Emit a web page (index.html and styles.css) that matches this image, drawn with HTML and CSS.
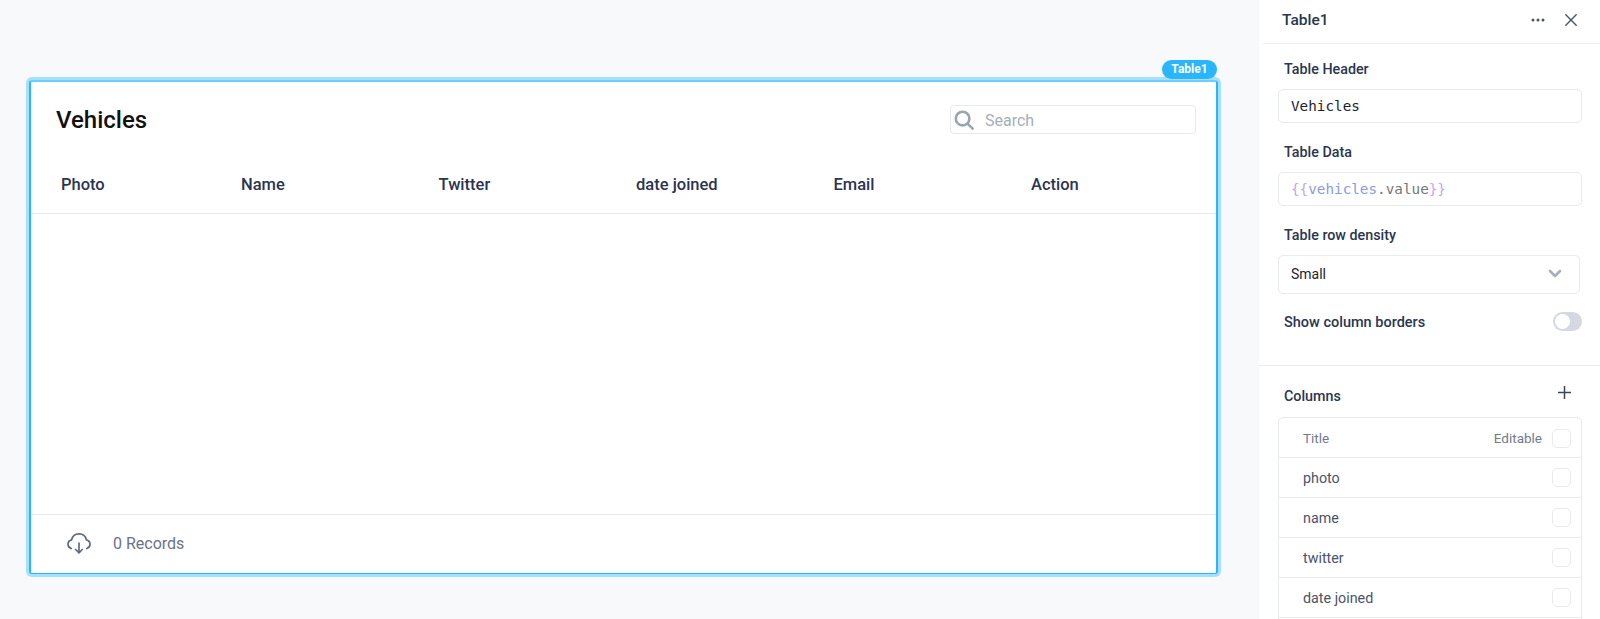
FILE: index.html
```html
<!DOCTYPE html>
<html lang="en">
<head>
<meta charset="utf-8">
<title>Table1</title>
<link rel="stylesheet" href="styles.css">
</head>
<body>
<div class="app">
  <main class="canvas">
    <section class="widget">
      <span class="pill">Table1</span>
      <div class="widget-head">
        <h1 class="title">Vehicles</h1>
        <div class="search">
          <svg class="search-icon" viewBox="0 0 20 20" width="20" height="20" fill="none" stroke="#9aa5b1" stroke-width="2.6" stroke-linecap="round"><circle cx="8.6" cy="8.6" r="6.800"/><path d="M13.8 13.8L18.6 18.6"/></svg>
          <span class="search-text">Search</span>
        </div>
      </div>
      <div class="thead">
        <span class="th">Photo</span>
        <span class="th">Name</span>
        <span class="th">Twitter</span>
        <span class="th">date joined</span>
        <span class="th">Email</span>
        <span class="th">Action</span>
      </div>
      <div class="tbody"></div>
      <div class="tfoot">
        <svg class="cloud" viewBox="0 0 24 21" width="24" height="21" fill="none" stroke="#5f6b80" stroke-width="1.700" stroke-linecap="round" stroke-linejoin="round"><path d="M4.300 15.500C2.300 14.800 1 13.200 1 11.200c0-2.200 1.500-3.900 3.600-4.300C5.400 3.200 8.400 .9 12 .9s6.600 2.300 7.400 6C21.500 7.300 23 9 23 11.200c0 2-1.300 3.600-3.300 4.300"/><path d="M12 10V19.500M8.700 16.500L12 19.800l3.300-3.300"/></svg>
        <span class="records">0 Records</span>
      </div>
    </section>
  </main>
  <aside class="panel">
    <header class="panel-head">
      <span class="panel-title">Table1</span>
      <div class="panel-actions">
        <svg viewBox="0 0 14 4" width="14" height="4" fill="#4a5568"><circle cx="2" cy="2" r="1.500"/><circle cx="7" cy="2" r="1.500"/><circle cx="12" cy="2" r="1.500"/></svg>
        <svg viewBox="0 0 12 12" width="12" height="12" fill="none" stroke="#4a5568" stroke-width="1.400" stroke-linecap="round"><path d="M.8 .8L11.200 11.200M11.200 .8L.8 11.200"/></svg>
      </div>
    </header>
    <div class="props">
      <label class="label">Table Header</label>
      <div class="field mono">Vehicles</div>
      <label class="label">Table Data</label>
      <div class="field mono"><span class="brace">{{</span><span class="var">vehicles</span><span class="rest">.value</span><span class="brace">}}</span></div>
      <label class="label">Table row density</label>
      <div class="field select">
        <span>Small</span>
        <svg viewBox="0 0 14 9" width="14" height="9" fill="none" stroke="#a6afbd" stroke-width="2.600" stroke-linecap="round" stroke-linejoin="round"><path d="M2 2l5 5 5-5"/></svg>
      </div>
      <div class="toggle-row">
        <span class="label-inline toggle-label">Show column borders</span>
        <span class="toggle"><span class="knob"></span></span>
      </div>
    </div>
    <div class="columns">
      <div class="columns-head">
        <span class="label-inline columns-label">Columns</span>
        <svg viewBox="0 0 13 13" width="13" height="13" fill="none" stroke="#3a4557" stroke-width="1.500"><path d="M6.500 0V13M0 6.500H13"/></svg>
      </div>
      <div class="col-table">
        <div class="col-row col-header"><span>Title</span><span class="col-right"><span>Editable</span><span class="check"></span></span></div>
        <div class="col-row"><span>photo</span><span class="check"></span></div>
        <div class="col-row"><span>name</span><span class="check"></span></div>
        <div class="col-row"><span>twitter</span><span class="check"></span></div>
        <div class="col-row"><span>date joined</span><span class="check"></span></div>
        <div class="col-row"></div>
      </div>
    </div>
  </aside>
</div>
</body>
</html>
```

FILE: styles.css
```css
* { box-sizing: border-box; }
html, body { margin: 0; height: 619px; overflow: hidden; }
body { font-family: Roboto, "Liberation Sans", sans-serif; background: #f8f9fb; color: #1a2238; }
.app { display: flex; height: 619px; }
.canvas { width: 1259px; flex: none; padding: 80px 0 0 29px; }

.widget {
  position: relative;
  width: 1189px;
  height: 494px;
  display: flex;
  flex-direction: column;
  background: #fff;
  border-style: solid;
  border-color: #6ccdff #29b6ff #29b6ff #29b6ff;
  border-width: 2px 2px 1px 2px;
  border-radius: 3px;
  box-shadow: 0 0 0 3px #a5e1ff;
}
.pill {
  position: absolute;
  top: -22px;
  right: -1px;
  height: 19px;
  width: 55px;
  border-radius: 10px;
  background: #29b6ff;
  color: #fff;
  font-size: 12px;
  font-weight: 700;
  line-height: 19px;
  text-align: center;
}
.widget-head { display: flex; justify-content: space-between; align-items: flex-start; height: 73px; padding: 26px 20px 0 25px; }
.title { margin: 0; font-size: 24px; font-weight: 500; line-height: 24px; color: #111; }
.search { width: 246px; height: 29px; margin-top: -3px; display: flex; align-items: center; gap: 11px; padding-left: 3px; border: 1px solid #e6e9ee; border-radius: 4px; }
.search-icon { flex: none; }
.search-text { font-size: 16px; color: #a6aebb; padding-top: 2px; }
.thead { display: grid; grid-template-columns: 180px repeat(5, 197.500px); height: 59px; padding: 0 0 0 30px; align-items: center; border-bottom: 1px solid #e5e7eb; }
.th { font-size: 16.500px; font-weight: 500; color: #2b3450; }
.tbody { flex: 1; }
.tfoot { height: 59px; display: flex; align-items: center; gap: 22px; padding: 0 0 2px 36px; border-top: 1px solid #e5e7eb; }
.cloud { flex: none; }
.records { font-size: 16px; color: #6a7385; }

.panel { flex: 1; background: #fff; overflow: hidden; font-size: 14px; }
.panel-head { height: 44px; margin-left: 4px; padding: 0 23px 3px 19px; display: flex; align-items: center; justify-content: space-between; border-bottom: 1px solid #eef0f3; }
.panel-title { font-size: 15.500px; font-weight: 500; color: #2a3650; }
.panel-actions { display: flex; align-items: center; gap: 20px; }
.props { height: 322px; padding: 16px 18px 0 19px; border-bottom: 1px solid #e8eaee; }
.label { display: block; font-size: 14.300px; font-weight: 500; line-height: 18px; color: #2a3650; margin: 0 0 11px 6px; }
.field { height: 34px; margin-bottom: 20px; padding: 0 12px; display: flex; align-items: center; border: 1px solid #e8eaee; border-radius: 5px; font-size: 14px; color: #1c2330; }
.mono { font-family: "DejaVu Sans Mono", "Liberation Mono", monospace; font-size: 14.300px; }
.brace { color: #c9a4e6; }
.var { color: #8b9be0; }
.rest { color: #777; }
.select { height: 39px; width: 302px; margin-bottom: 18px; justify-content: space-between; padding-right: 17px; padding-bottom: 2px; }
.toggle-row { display: flex; align-items: center; justify-content: space-between; margin: -1px 0 0 6px; height: 20px; }
.label-inline { font-size: 14.300px; font-weight: 500; color: #2a3650; }
.toggle-label { font-size: 14.500px; padding-top: 2px; }
.toggle { width: 29px; height: 19px; border-radius: 10px; background: #d3d8e1; padding: 2px; display: block; }
.knob { display: block; width: 15px; height: 15px; border-radius: 50%; background: #fff; }
.columns { padding: 0 18px 0 19px; }
.columns-head { height: 51px; padding: 20px 11px 0 0; display: flex; justify-content: space-between; align-items: flex-start; margin-left: 6px; }
.columns-label { margin-top: 1px; line-height: 18px; }
.col-table { border: 1px solid #e8eaee; border-radius: 5px; }
.col-row { height: 40px; display: flex; align-items: center; justify-content: space-between; padding: 0 10px 0 24px; border-bottom: 1px solid #e8eaee; font-size: 14.300px; color: #4a5468; }
.col-header { font-size: 13.500px; color: #717a8c; padding-top: 1px; }
.col-right { display: flex; align-items: center; gap: 10px; }
.check { display: block; width: 19px; height: 19px; border: 1px solid #e8eaee; border-radius: 5px; background: #fff; }
```
